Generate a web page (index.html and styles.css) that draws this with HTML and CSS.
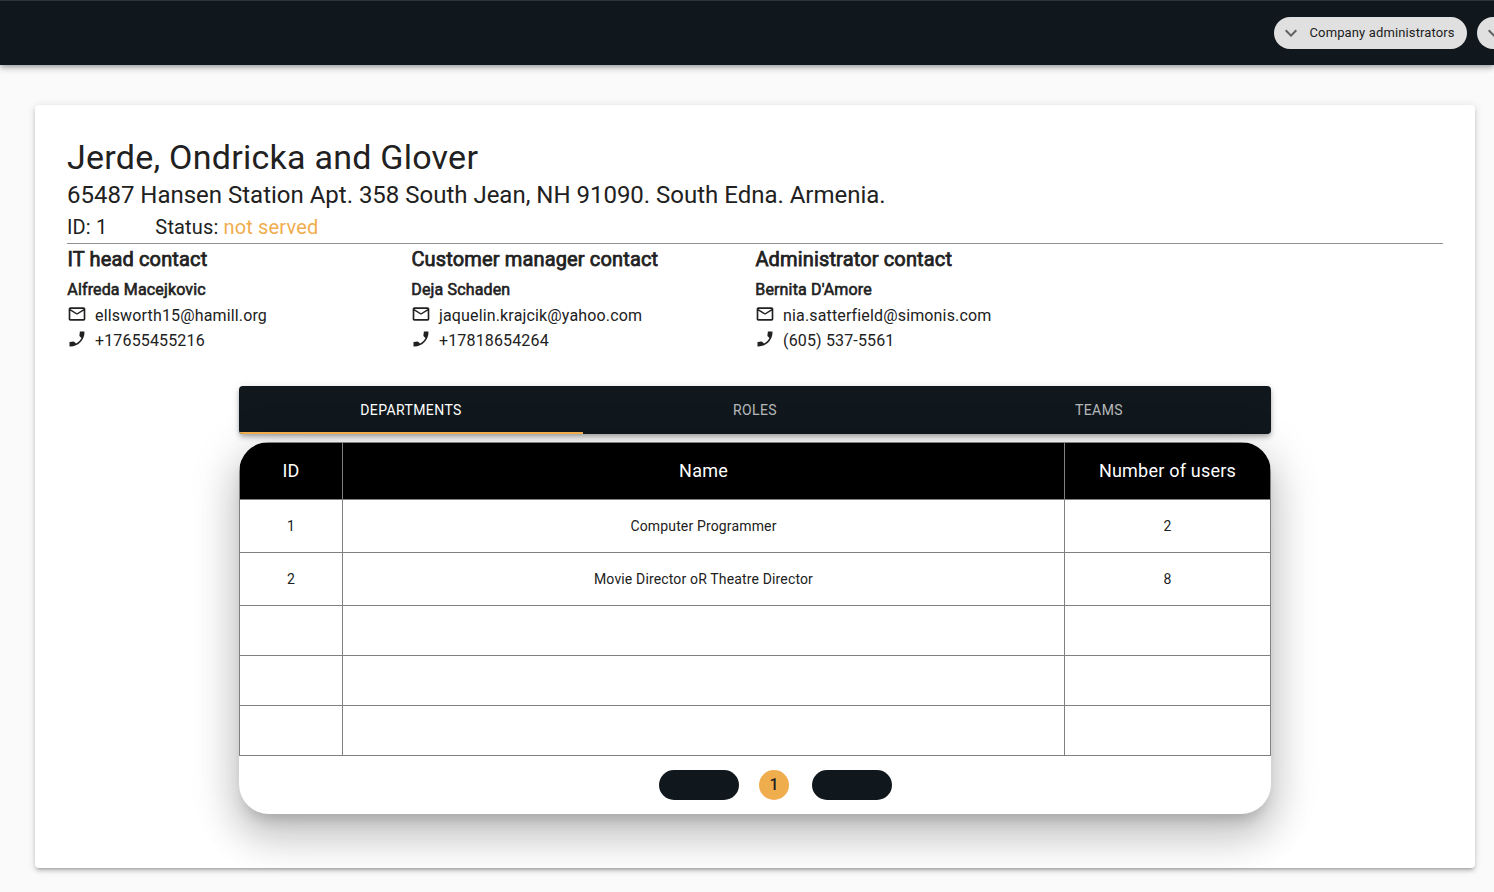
FILE: index.html
```
<!DOCTYPE html>
<html lang="en">
<head>
<meta charset="utf-8">
<title>Company</title>
<link rel="stylesheet" href="styles.css">
</head>
<body>
<svg class="defs" width="0" height="0">
  <symbol id="chevron" viewBox="0 0 24 24"><path d="M7.41 8.59 12 13.17l4.59-4.58L18 10l-6 6-6-6 1.41-1.41z"/></symbol>
  <symbol id="mail" viewBox="0 0 24 24"><path d="M22 6c0-1.100-.9-2-2-2H4c-1.100 0-2 .9-2 2v12c0 1.100.9 2 2 2h16c1.100 0 2-.9 2-2V6zm-2 0l-8 5-8-5h16zm0 12H4V8l8 5 8-5v10z"/></symbol>
  <symbol id="phone" viewBox="0 0 24 24"><path transform="matrix(-1 0 0 1 24 0)" d="M21 15.460l-5.270-.61-2.520 2.520c-2.830-1.440-5.150-3.750-6.590-6.590l2.530-2.530L8.540 3H3.030C2.450 13.180 10.820 21.550 21 20.970v-5.510z"/></symbol>
</svg>
<header class="topbar">
  <div class="chip"><svg class="chip-icon"><use href="#chevron"/></svg><span>Company administrators</span></div>
  <div class="chip"><svg class="chip-icon"><use href="#chevron"/></svg></div>
</header>
<main class="card">
  <h1 class="company">Jerde, Ondricka and Glover</h1>
  <p class="address">65487 Hansen Station Apt. 358 South Jean, NH 91090. South Edna. Armenia.</p>
  <div class="meta"><span>ID: 1</span><span>Status: <span class="status">not served</span></span></div>
  <section class="contacts">
    <div>
      <h2 class="contact-title">IT head contact</h2>
      <div class="contact-name">Alfreda Macejkovic</div>
      <div class="contact-line"><svg class="icon"><use href="#mail"/></svg><span>ellsworth15@hamill.org</span></div>
      <div class="contact-line"><svg class="icon"><use href="#phone"/></svg><span>+17655455216</span></div>
    </div>
    <div>
      <h2 class="contact-title">Customer manager contact</h2>
      <div class="contact-name">Deja Schaden</div>
      <div class="contact-line"><svg class="icon"><use href="#mail"/></svg><span>jaquelin.krajcik@yahoo.com</span></div>
      <div class="contact-line"><svg class="icon"><use href="#phone"/></svg><span>+17818654264</span></div>
    </div>
    <div>
      <h2 class="contact-title">Administrator contact</h2>
      <div class="contact-name">Bernita D'Amore</div>
      <div class="contact-line"><svg class="icon"><use href="#mail"/></svg><span>nia.satterfield@simonis.com</span></div>
      <div class="contact-line"><svg class="icon"><use href="#phone"/></svg><span>(605) 537-5561</span></div>
    </div>
  </section>
  <section class="panel">
    <nav class="tabs">
      <div class="tab tab-active">Departments</div>
      <div class="tab">Roles</div>
      <div class="tab">Teams</div>
    </nav>
    <div class="table-box">
      <div class="grid">
        <div class="row head"><div>ID</div><div>Name</div><div>Number of users</div></div>
        <div class="row"><div>1</div><div>Computer Programmer</div><div>2</div></div>
        <div class="row"><div>2</div><div>Movie Director oR Theatre Director</div><div>8</div></div>
        <div class="row empty"><div></div><div></div><div></div></div>
        <div class="row empty"><div></div><div></div><div></div></div>
        <div class="row empty"><div></div><div></div><div></div></div>
      </div>
      <div class="pager">
        <div class="pager-button"></div>
        <div class="page">1</div>
        <div class="pager-button"></div>
      </div>
    </div>
  </section>
</main>
</body>
</html>
```
FILE: styles.css
```
* { box-sizing: border-box; }
body {
  margin: 0;
  height: 892px;
  overflow: hidden;
  background: #fafafa;
  color: #212121;
  font-family: Roboto, sans-serif;
}
.defs { position: absolute; }
h1, h2, p { margin: 0; font-weight: 400; }
.topbar {
  height: 65px;
  padding: 16px 0 0 1274px;
  display: flex;
  gap: 10px;
  overflow: hidden;
  background: #11181d;
  border-top: 1px solid #2b353b;
  box-shadow: 0 2px 4px -1px rgba(0,0,0,.2), 0 4px 5px 0 rgba(0,0,0,.14), 0 1px 10px 0 rgba(0,0,0,.12);
}
.chip {
  flex: none;
  height: 32px;
  width: 193px;
  padding: 0 0 0 5px;
  display: flex;
  align-items: center;
  border-radius: 16px;
  background: #e0e0e0;
  font-size: 13px;
  letter-spacing: .13px;
  line-height: 31px;
  white-space: nowrap;
}
.chip span { height: 32px; padding-left: .5px; }
.chip-icon { width: 24px; height: 24px; margin-right: 6px; fill: #616161; }
.card {
  margin: 40px 19px 0 35px;
  height: 763px;
  padding: 32px;
  border-radius: 4px;
  background: #fff;
  box-shadow: 0 3px 3px -2px rgba(0,0,0,.2), 0 3px 4px 0 rgba(0,0,0,.14), 0 1px 8px 0 rgba(0,0,0,.12);
}
.company { height: 42px; font-size: 34px; line-height: 40px; letter-spacing: .25px; }
.address { font-size: 24px; line-height: 32px; letter-spacing: -.01px; }
.meta {
  height: 33px;
  display: flex;
  gap: 48px;
  border-bottom: 1px solid #8f9491;
  font-size: 20px;
  line-height: 32px;
  letter-spacing: .15px;
}
.status { color: #f0ad4e; }
.contacts { display: grid; grid-template-columns: repeat(3, 344px); height: 142px; }
.contact-title { height: 32px; padding-left: .4px; font-size: 20px; line-height: 31px; letter-spacing: .15px; -webkit-text-stroke: .75px; }
.contact-name { padding-left: .3px; font-size: 16px; line-height: 27px; letter-spacing: .15px; -webkit-text-stroke: .6px; }
.contact-line { display: flex; height: 25px; font-size: 16px; line-height: 25px; letter-spacing: .15px; }
.icon { width: 20px; height: 20px; margin: 1px 8px 0 0; fill: #212121; }
.panel { width: 1032px; margin: 0 auto; }
.tabs {
  height: 48px;
  display: grid;
  grid-template-columns: repeat(3, 1fr);
  overflow: hidden;
  border-radius: 4px;
  background: #11181d;
  color: rgba(255,255,255,.7);
  font-size: 14px;
  line-height: 48px;
  letter-spacing: .4px;
  text-align: center;
  text-transform: uppercase;
  box-shadow: 0 2px 4px -1px rgba(0,0,0,.2), 0 4px 5px 0 rgba(0,0,0,.14), 0 1px 10px 0 rgba(0,0,0,.12);
}
.tab-active { color: #fff; box-shadow: inset 0 -2px #f0ad4e; }
.table-box {
  margin-top: 8px;
  height: 372px;
  overflow: hidden;
  border-radius: 30px;
  background: #fff;
  box-shadow: 0 11px 15px -7px rgba(0,0,0,.2), 0 24px 38px 3px rgba(0,0,0,.14), 0 9px 46px 8px rgba(0,0,0,.12);
}
.grid { border: solid #808080; border-width: 1px 1px 0; }
.row {
  display: grid;
  grid-template-columns: 102px 722px 206px;
  height: 53px;
  border-bottom: 1px solid #808080;
  font-size: 14px;
  line-height: 52px;
  letter-spacing: .15px;
  text-align: center;
}
.row > div + div { border-left: 1px solid #808080; }
.head { height: 57px; background: #000; color: #fff; font-size: 18px; line-height: 56px; letter-spacing: .22px; }
.empty { height: 50px; }
.pager { display: flex; padding: 14px 0 0 420px; }
.pager-button { width: 80px; height: 30px; border-radius: 15px; background: #11181d; }
.page {
  width: 30px;
  height: 30px;
  margin: 0 23px 0 20px;
  border-radius: 50%;
  background: #f0ad4e;
  font-size: 16px;
  font-weight: 500;
  line-height: 30px;
  text-align: center;
}
```
